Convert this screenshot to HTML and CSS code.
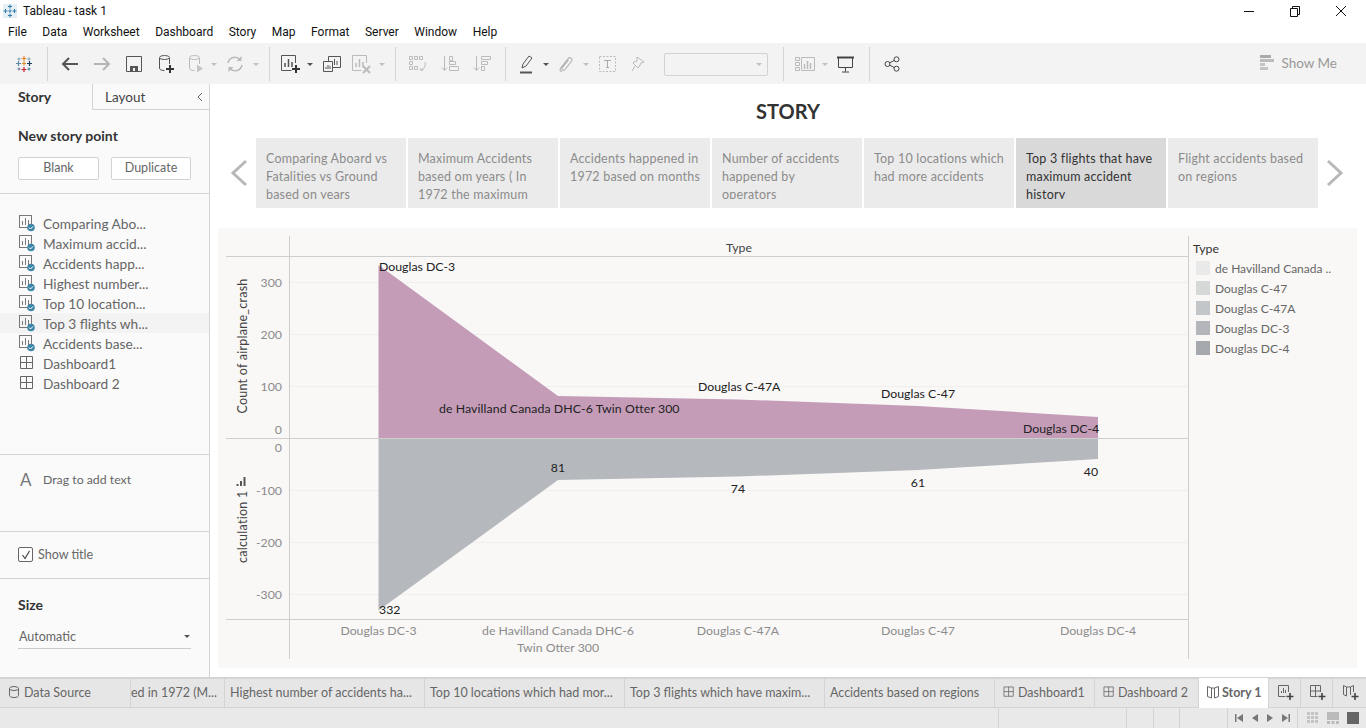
FILE: index.html
```html
<!DOCTYPE html>
<html lang="en">
<head>
<meta charset="utf-8">
<title>Tableau - task 1</title>
<link rel="stylesheet" href="styles.css">
</head>
<body>
<svg class="defs" width="0" height="0" aria-hidden="true">
  <defs>
    <symbol id="sheet" viewBox="0 0 18 18">
      <rect x="1.5" y="1.5" width="12" height="12" fill="none" stroke="#777"/>
      <path d="M4.5 11V7M7.5 11V4M10.5 11V6" stroke="#777" fill="none"/>
      <circle cx="13" cy="13.5" r="3.8" fill="#3f85a8"/>
      <path d="M11 13.5l1.5 1.5 2.5-2.6" stroke="#fff" fill="none"/>
    </symbol>
    <symbol id="dash" viewBox="0 0 18 18">
      <path d="M2.5 2.5h12v12h-12zM8.5 2.5v12M2.5 8.5h12" stroke="#666" fill="none"/>
    </symbol>
  </defs>
</svg>

<header class="titlebar">
  <svg class="title-logo" width="16" height="16" viewBox="0 0 16 16">
    <rect x="1" y="1" width="14" height="14" fill="#e4eff5"/>
    <path d="M8 1.5v4M6 3.5h4M8 10.5v4M6 12.5h4M3.5 6v4M1.500 8h4M12.500 6v4M10.500 8h4M8 6.500v3M6.500 8h3" stroke="#2d7ba6" fill="none"/>
  </svg>
  <span class="title-text">Tableau - task 1</span>
  <div class="win-controls">
    <svg width="46" height="20" viewBox="0 0 46 20"><path d="M18 10.500h10" stroke="#111"/></svg>
    <svg width="46" height="20" viewBox="0 0 46 20"><path d="M18.500 7.500h7v8h-7zM20.500 7.500v-2h7v8h-2" fill="none" stroke="#111"/></svg>
    <svg width="46" height="20" viewBox="0 0 46 20"><path d="M18 5l10 10M28 5L18 15" stroke="#111"/></svg>
  </div>
</header>

<nav class="menubar">
  <span>File</span><span>Data</span><span>Worksheet</span><span>Dashboard</span><span>Story</span><span>Map</span><span>Format</span><span>Server</span><span>Window</span><span>Help</span>
</nav>

<div class="toolbar">
  <div class="tg g1">
    <div class="tb w32">
      <svg width="18" height="18" viewBox="0 0 18 18" fill="none">
        <path d="M9 1v5M6.500 3.500h5" stroke="#e8862c" stroke-width="1.200"/>
        <path d="M3.500 6v5M1 8.500h5" stroke="#5b87a8" stroke-width="1.200"/>
        <path d="M14.500 6v5M12 8.500h5" stroke="#1f3f63" stroke-width="1.200"/>
        <path d="M9 12v5M6.500 14.500h5" stroke="#c72035" stroke-width="1.200"/>
        <path d="M9 6.500v4M7 8.500h4" stroke="#d98a2b" stroke-width="1.200"/>
        <path d="M4 2.500v3M2.500 4h3M14 2.500v3M12.500 4h3" stroke="#7099a6" stroke-width=".9"/>
        <path d="M4 12.500v3M2.500 14h3" stroke="#5c6692" stroke-width=".9"/>
        <path d="M14 12.500v3M12.500 14h3" stroke="#2a6f9e" stroke-width=".9"/>
      </svg>
    </div>
  </div>
  <div class="tg g2">
    <div class="tb w32"><svg width="18" height="16" viewBox="0 0 18 16" fill="none"><path d="M17 8H2M8 2L2 8l6 6" stroke="#555" stroke-width="2"/></svg></div>
    <div class="tb w32"><svg width="18" height="16" viewBox="0 0 18 16" fill="none"><path d="M1 8h15M10 2l6 6-6 6" stroke="#b5b5b5" stroke-width="2"/></svg></div>
    <div class="tb w32"><svg width="16" height="16" viewBox="0 0 16 16" fill="none"><path d="M.5.500h15v15H.5z" stroke="#555"/><path d="M4 15V10h8v5" fill="#555"/><path d="M7 12h2v3H7z" fill="#f3f3f3"/></svg></div>
    <div class="tb w32"><svg width="18" height="20" viewBox="0 0 18 20" fill="none"><path d="M2.500 4v10c0 1.500 1.500 2.500 5 2.500M12.500 4v6" stroke="#555"/><ellipse cx="7.500" cy="3.500" rx="5" ry="2" stroke="#555"/><path d="M13 11v8M9 15h8" stroke="#333" stroke-width="2"/></svg></div>
    <div class="tb w28"><svg width="18" height="20" viewBox="0 0 18 20" fill="none"><path d="M2.500 4v10c0 1.500 1.500 2.500 5 2.500M12.500 4v6" stroke="#bbb"/><ellipse cx="7.500" cy="3.500" rx="5" ry="2" stroke="#bbb"/><path d="M10 10.500l6 4-6 4z" fill="#c4c4c4"/></svg></div>
    <div class="tb w8"><i class="caret off"></i></div>
    <div class="tb w34"><svg width="18" height="18" viewBox="0 0 18 18" fill="none"><path d="M2 8a7 7 0 0 1 12-3.500M16 10a7 7 0 0 1-12 3.500" stroke="#bbb" stroke-width="1.500"/><path d="M15.500 1v5h-5zM2.500 17v-5h5z" fill="#bbb"/></svg></div>
    <div class="tb w8"><i class="caret off"></i></div>
  </div>
  <div class="tg g3">
    <div class="tb w31"><svg width="20" height="20" viewBox="0 0 20 20" fill="none"><path d="M14.500 9V1.500h-14v15h10" stroke="#555"/><path d="M4 13V9M7.500 13V5M11 13V8" stroke="#555" stroke-width="1.500"/><path d="M15 11v8M11 15h8" stroke="#333" stroke-width="2"/></svg></div>
    <div class="tb w8"><i class="caret"></i></div>
    <div class="tb w36"><svg width="18" height="18" viewBox="0 0 18 18" fill="none"><path d="M5.500 1.500h12v11h-12z" stroke="#555" fill="#f3f3f3"/><path d="M9 10V7M11.500 10V4M14 10V6" stroke="#555"/><path d="M.5 6.500h9v10h-9z" stroke="#555" fill="#f3f3f3"/><path d="M3 14v-2M5 14v-4M7 14v-3" stroke="#555"/></svg></div>
    <div class="tb w22"><svg width="20" height="20" viewBox="0 0 20 20" fill="none"><path d="M15.500 9V1.500h-14v15h9" stroke="#bbb"/><path d="M5 13V9M8.500 13V5M12 13V8" stroke="#bbb" stroke-width="1.500"/><path d="M12 12l7 7M19 12l-7 7" stroke="#bbb" stroke-width="2"/></svg></div>
    <div class="tb w20"><i class="caret off"></i></div>
  </div>
  <div class="tg g4">
    <div class="tb w32"><svg width="20" height="18" viewBox="0 0 20 18" fill="none" stroke="#bbb"><path d="M1.500 1.500h3v3h-3zM6.500 1.500h3v3h-3zM11.500 1.500h3v3h-3zM1.500 6.500h3v3h-3zM1.500 11.500h3v3h-3zM6.500 11.500h3v3h-3z"/><path d="M17 7c1 4-1 7-4 8M12 13l1 2.500 2.500-1"/></svg></div>
    <div class="tb w32"><svg width="18" height="18" viewBox="0 0 18 18" fill="none" stroke="#bbb"><path d="M3.500 1v14M1 12.500l2.500 3 2.500-3"/><path d="M8.500 1.500h3v4h-3zM8.500 6.500h6v3h-6zM8.500 11.500h9v4h-9z"/></svg></div>
    <div class="tb w32"><svg width="18" height="18" viewBox="0 0 18 18" fill="none" stroke="#bbb"><path d="M3.500 1v14M1 12.500l2.500 3 2.500-3"/><path d="M8.500 1.500h9v3h-9zM8.500 6.500h6v3h-6zM8.500 11.500h3v4h-3z"/></svg></div>
  </div>
  <div class="tg g5">
    <div class="tb w30"><svg width="14" height="20" viewBox="0 0 14 20" fill="none"><path d="M2 14l1-4L9 2l3 2-6 8z" stroke="#555"/><path d="M0 18.500h12" stroke="#555" stroke-width="2"/></svg></div>
    <div class="tb w8"><i class="caret"></i></div>
    <div class="tb w32"><svg width="14" height="16" viewBox="0 0 14 16" fill="none"><path d="M9.500 4L3.500 11.500C2 13.500 4.500 15.500 6 13.500L12.300 5.500C14.300 2.500 10.800.5 9 2.800L2 11.500C.2 14 1.500 15.500 3 15.500" stroke="#b4b4b4" stroke-width="1.200"/></svg></div>
    <div class="tb w8"><i class="caret off"></i></div>
    <div class="tb w36"><svg width="18" height="16" viewBox="0 0 18 16" fill="none"><rect x=".5" y=".5" width="16" height="15" stroke="#bbb" stroke-dasharray="2 1.500"/><path d="M5 4.500h7M8.500 4.500v7M7 11.500h3" stroke="#aaa"/></svg></div>
    <div class="tb w24"><svg width="14" height="16" viewBox="0 0 14 16" fill="none"><path d="M6 1l7 5-3 1-2 4-1 1-5-5 1-1 3-1zM4 10l-3 5" stroke="#bbb"/></svg></div>
    <div class="font-box"><i class="caret off"></i></div>
  </div>
  <div class="tg g6">
    <div class="tb w32"><svg width="20" height="16" viewBox="0 0 20 16" fill="none" stroke="#bbb"><path d="M.5 1.500h4v3h-4zM.5 6.500h4v3h-4zM.5 11.500h4v3h-4zM6.500 1.500h13v13h-13z"/><path d="M9.500 13V8M12.500 13V5M15.500 13V7" stroke-width="1.500"/></svg></div>
    <div class="tb w8"><i class="caret off"></i></div>
    <div class="tb w34"><svg width="18" height="18" viewBox="0 0 18 18" fill="none"><path d="M0 2.500h17" stroke="#444" stroke-width="2"/><path d="M1.500 3v9.500h14V3M8.500 12.500v4M5 17h7" stroke="#444"/></svg></div>
  </div>
  <div class="tg g7">
    <div class="tb w32"><svg width="16" height="16" viewBox="0 0 16 16" fill="none" stroke="#444"><circle cx="3.500" cy="8" r="2.500"/><circle cx="12.500" cy="3.300" r="2.500"/><circle cx="12.500" cy="12.700" r="2.500"/><path d="M5.700 6.800l4.600-2.400M5.700 9.200l4.600 2.400"/></svg></div>
  </div>
  <div class="show-me">
    <svg width="15" height="16" viewBox="0 0 15 16"><path d="M0 0h11v3H0z" fill="#aaa"/><path d="M0 4h14v3H0z" fill="#bbb"/><path d="M0 8h5v3H0z" fill="#c4c4c4"/><path d="M0 12h8v3H0z" fill="#c4c4c4"/></svg>
    <span>Show Me</span>
  </div>
</div>

<main class="workspace">
  <aside class="sidebar">
    <div class="side-tabs">
      <div class="side-tab active">Story</div>
      <div class="side-tab">Layout
        <svg class="collapse" width="8" height="10" viewBox="0 0 8 10" fill="none"><path d="M6 1L2 5l4 4" stroke="#666"/></svg>
      </div>
    </div>
    <section class="new-point">
      <h2>New story point</h2>
      <div class="btn-row">
        <button class="btn blank">Blank</button>
        <button class="btn dup">Duplicate</button>
      </div>
    </section>
    <ul class="sheet-list">
      <li><svg width="18" height="18"><use href="#sheet"/></svg>Comparing Abo...</li>
      <li><svg width="18" height="18"><use href="#sheet"/></svg>Maximum accid...</li>
      <li><svg width="18" height="18"><use href="#sheet"/></svg>Accidents happ...</li>
      <li><svg width="18" height="18"><use href="#sheet"/></svg>Highest number...</li>
      <li><svg width="18" height="18"><use href="#sheet"/></svg>Top 10 location...</li>
      <li class="current"><svg width="18" height="18"><use href="#sheet"/></svg>Top 3 flights wh...</li>
      <li><svg width="18" height="18"><use href="#sheet"/></svg>Accidents base...</li>
      <li><svg width="18" height="18"><use href="#dash"/></svg>Dashboard1</li>
      <li><svg width="18" height="18"><use href="#dash"/></svg>Dashboard 2</li>
    </ul>
    <section class="drag-text"><span class="big-a">A</span><span>Drag to add text</span></section>
    <section class="show-title">
      <span class="check"><svg width="12" height="12" viewBox="0 0 12 12" fill="none"><path d="M2.500 6l2.500 3.500L9.500 2" stroke="#444" stroke-width="1.200"/></svg></span>
      <span>Show title</span>
    </section>
    <section class="size">
      <h3>Size</h3>
      <div class="size-select"><span>Automatic</span><i class="caret"></i></div>
    </section>
  </aside>

  <div class="story">
    <h1>STORY</h1>
    <div class="navigator">
      <svg class="nav-arrow" width="18" height="28" viewBox="0 0 18 28" fill="none"><path d="M16 2L3 14l13 12" stroke="#b8b8b8" stroke-width="3"/></svg>
      <div class="points">
        <div class="point"><p>Comparing Aboard vs Fatalities vs Ground based on years</p></div>
        <div class="point"><p>Maximum Accidents based om years ( In 1972 the maximum</p></div>
        <div class="point"><p>Accidents happened in 1972 based on months</p></div>
        <div class="point"><p>Number of accidents happened by<br>operators</p></div>
        <div class="point"><p>Top 10 locations which had more accidents</p></div>
        <div class="point selected"><p>Top 3 flights that have maximum accident history</p></div>
        <div class="point"><p>Flight accidents based on regions</p></div>
      </div>
      <svg class="nav-arrow" width="18" height="28" viewBox="0 0 18 28" fill="none"><path d="M2 2l13 12L2 26" stroke="#b8b8b8" stroke-width="3"/></svg>
    </div>

    <div class="viz">
      <svg class="chart" width="1139" height="440" viewBox="218 228 1139 440">
        <g class="grid">
          <path d="M290 282.500h898M290 334.500h898M290 386.500h898M290 490.500h898M290 542.500h898M290 594.500h898"/>
        </g>
        <polygon class="area-top" points="378.500,265 558,396 738,399.500 918,406 1098,417 1098,438 378.500,438"/>
        <polygon class="area-bot" points="378.500,438 1098,438 1098,459 918,470 738,476.500 558,480 378.500,610.500"/>
        <g class="rule">
          <path d="M289.500 236v423M1188.500 236v423M226 256.500h962M226 438.500h962M226 619.500h962"/>
        </g>
        <text class="hdr" x="739" y="251.500" text-anchor="middle">Type</text>
        <g class="axis" text-anchor="end">
          <text x="282" y="287">300</text><text x="282" y="339">200</text><text x="282" y="391">100</text><text x="282" y="434">0</text>
          <text x="282" y="452">0</text><text x="282" y="495">-100</text><text x="282" y="547">-200</text><text x="282" y="599">-300</text>
        </g>
        <text class="hdr rot" transform="translate(246.500 346) rotate(-90)" text-anchor="middle">Count of airplane_crash</text>
        <text class="hdr rot" transform="translate(246.500 563) rotate(-90)">calculation 1</text>
        <path class="sort" d="M237.500 486v-2M241 486v-5M244.500 486v-9"/>
        <g class="mark">
          <text x="379" y="271">Douglas DC-3</text>
          <text class="wide" x="439" y="413">de Havilland Canada DHC-6 Twin Otter 300</text>
          <text x="698" y="391">Douglas C-47A</text>
          <text x="881" y="398">Douglas C-47</text>
          <text x="1023" y="432.500">Douglas DC-4</text>
          <text x="558" y="472" text-anchor="middle">81</text>
          <text x="738" y="493" text-anchor="middle">74</text>
          <text x="918" y="487" text-anchor="middle">61</text>
          <text x="1091" y="476" text-anchor="middle">40</text>
          <text x="379" y="614">332</text>
        </g>
        <g class="axis" text-anchor="middle">
          <text x="378.500" y="635">Douglas DC-3</text>
          <text x="558" y="635">de Havilland Canada DHC-6</text>
          <text x="558" y="652">Twin Otter 300</text>
          <text x="738" y="635">Douglas C-47A</text>
          <text x="918" y="635">Douglas C-47</text>
          <text x="1098" y="635">Douglas DC-4</text>
        </g>
      </svg>
      <div class="legend">
        <h4>Type</h4>
        <ul>
          <li><i class="sw s1"></i>de Havilland Canada ..</li>
          <li><i class="sw s2"></i>Douglas C-47</li>
          <li><i class="sw s3"></i>Douglas C-47A</li>
          <li><i class="sw s4"></i>Douglas DC-3</li>
          <li><i class="sw s5"></i>Douglas DC-4</li>
        </ul>
      </div>
    </div>
  </div>
</main>

<div class="tabbar">
  <div class="tab t-ds"><svg width="10" height="12" viewBox="0 0 10 12" fill="none" stroke="#666"><path d="M.5 2.500v7c0 1 1.500 2 4.500 2s4.500-1 4.500-2v-7"/><ellipse cx="5" cy="2.500" rx="4.500" ry="2"/></svg>Data Source</div>
  <div class="tab t-clip">ed in 1972 (M...</div>
  <div class="tab t-200">Highest number of accidents ha...</div>
  <div class="tab t-200">Top 10 locations which had mor...</div>
  <div class="tab t-200">Top 3 flights which have maxim...</div>
  <div class="tab t-170">Accidents based on regions</div>
  <div class="tab t-100"><svg width="14" height="14"><use href="#dash"/></svg>Dashboard1</div>
  <div class="tab t-104"><svg width="14" height="14"><use href="#dash"/></svg>Dashboard 2</div>
  <div class="tab t-story"><svg width="14" height="14" viewBox="0 0 14 14" fill="none" stroke="#666"><path d="M1.500 1.500l4 1.500v10l-4-1.500zM12.500 1.500l-4 1.500v10l4-1.500zM5.500 3h3"/></svg>Story 1</div>
  <div class="tab t-add"><svg width="18" height="18" viewBox="0 0 18 18" fill="none"><path d="M11.500 8V1.500h-10v11h7M4.500 9V7M6.500 9V4M8.500 9V6" stroke="#666"/><path d="M13 9v7M9.500 12.500h7" stroke="#444" stroke-width="1.600"/></svg></div>
  <div class="tab t-add"><svg width="18" height="18" viewBox="0 0 18 18" fill="none"><path d="M11.500 8V1.500h-10v11h7M6.500 1.500v11M1.500 7h10" stroke="#666"/><path d="M13 9v7M9.500 12.500h7" stroke="#444" stroke-width="1.600"/></svg></div>
  <div class="tab t-add end"><svg width="18" height="18" viewBox="0 0 18 18" fill="none"><path d="M1.500 1.500l3 1.500v9l-3-1.500zM11.500 8V1.500l-3 1.500v8M4.500 3h4" stroke="#666"/><path d="M13 9v7M9.500 12.500h7" stroke="#444" stroke-width="1.600"/></svg></div>
</div>

<footer class="statusbar">
  <div class="st s-999"></div>
  <div class="st s-128"></div>
  <div class="st s-27"></div>
  <div class="st s-26"></div>
  <div class="st s-48"></div>
  <div class="st s-70">
    <svg width="8" height="8" viewBox="0 0 8 8" fill="#777"><path d="M0 0h1.500v8H0zM8 0v8L2 4z"/></svg>
    <svg width="8" height="8" viewBox="0 0 8 8" fill="#777"><path d="M7 0v8L1 4z"/></svg>
    <svg width="8" height="8" viewBox="0 0 8 8" fill="#777"><path d="M1 0v8l6-4z"/></svg>
    <svg width="8" height="8" viewBox="0 0 8 8" fill="#777"><path d="M6.500 0H8v8H6.500zM0 0v8l6-4z"/></svg>
  </div>
  <div class="st s-views">
    <svg width="12" height="12" viewBox="0 0 12 12" fill="#c4c4c4"><path d="M0 0h3v3H0zM4 0h3v3H4zM8 0h3v3H8zM0 4h3v3H0zM4 4h3v3H4zM8 4h3v3H8zM0 8h3v3H0zM4 8h3v3H4zM8 8h3v3H8z"/></svg>
    <svg width="12" height="12" viewBox="0 0 12 12" fill="#bbb"><path d="M0 0h12v8H0zM0 9h3v3H0zM4.500 9h3v3h-3zM9 9h3v3H9z"/></svg>
    <svg width="12" height="12" viewBox="0 0 12 12" fill="#666"><path d="M0 0h12v12H0z"/></svg>
  </div>
</footer>
</body>
</html>
```
FILE: styles.css
```css
* { box-sizing: border-box; }
html, body { margin: 0; padding: 0; }
body {
  width: 1366px;
  height: 728px;
  overflow: hidden;
  display: flex;
  flex-direction: column;
  background: #fff;
  font-family: "Lato", "Liberation Sans", sans-serif;
  font-size: 12.500px;
  color: #555;
}
.defs { position: absolute; }

/* window chrome */
.titlebar {
  height: 21px;
  display: flex;
  align-items: center;
  padding-left: 2px;
  font-family: "Roboto", sans-serif;
  font-size: 12px;
  color: #111;
}
.title-text { margin-left: 5px; }
.win-controls { margin-left: auto; display: flex; padding-right: 2px; }
.win-controls svg { display: block; }
.menubar {
  height: 22px;
  display: flex;
  align-items: center;
  gap: 15.500px;
  padding-left: 8px;
  font-family: "Roboto", sans-serif;
  font-size: 12px;
  color: #111;
}

/* toolbar */
.toolbar {
  height: 41px;
  padding: 4px 0 3px;
  display: flex;
  background: #f3f3f3;
}
.tg { display: flex; align-items: center; border-right: 1px solid #d4d4d4; flex: none; }
.g1 { width: 48px; padding-left: 8px; }
.g2 { width: 222px; padding-left: 6px; }
.g3 { width: 126px; padding-left: 5px; }
.g4 { width: 110px; padding-left: 6px; }
.g5 { width: 278px; padding-left: 6px; }
.g6 { width: 86px; padding-left: 5px; }
.g7 { border-right: 0; padding-left: 6px; }
.tb { display: flex; align-items: center; justify-content: center; flex: none; height: 34px; }
.w8 { width: 8px; }
.w20 { width: 20px; }
.w22 { width: 22px; }
.w24 { width: 24px; }
.w28 { width: 28px; }
.w30 { width: 30px; }
.w31 { width: 31px; }
.w32 { width: 32px; }
.w34 { width: 34px; }
.w36 { width: 36px; }
.caret {
  display: block;
  width: 0; height: 0;
  border-left: 3.500px solid transparent;
  border-right: 3.500px solid transparent;
  border-top: 3.500px solid #555;
}
.caret.off { border-top-color: #c2c2c2; }
.font-box {
  width: 104px;
  height: 23px;
  margin-left: 14px;
  border: 1px solid #d2d2d2;
  border-radius: 2px;
  display: flex;
  align-items: center;
  justify-content: flex-end;
  padding-right: 5px;
}
.show-me {
  margin-left: auto;
  padding: 0 29px 3px 0;
  display: flex;
  align-items: center;
  gap: 6px;
  color: #999;
  font-size: 13.500px;
}

/* workspace */
.workspace { height: 593px; display: flex; }
.sidebar {
  width: 210px;
  flex: none;
  background: #fafafa;
  border-right: 1px solid #d4d4d4;
  display: flex;
  flex-direction: column;
}
.side-tabs { height: 26px; display: flex; flex: none; }
.side-tab {
  position: relative;
  flex: 1;
  padding: 5px 0 0 12px;
  font-size: 13.500px;
  color: #444;
  border-bottom: 1px solid #d4d4d4;
  border-left: 1px solid #d4d4d4;
}
.side-tab.active {
  flex: none;
  width: 92px;
  padding: 4px 0 0 18px;
  border: 0;
  font-size: 14px;
  font-weight: 700;
  color: #333;
}
.collapse { position: absolute; right: 5px; top: 8px; }
.new-point {
  height: 84px;
  flex: none;
  padding: 17px 18px 0;
  border-bottom: 1px solid #d4d4d4;
}
.new-point h2 { margin: 0; font-size: 14px; line-height: 18px; font-weight: 700; color: #333; }
.btn-row { display: flex; gap: 12px; margin-top: 12px; }
.btn {
  height: 23px;
  padding: 0 0 2px;
  background: #fff;
  border: 1px solid #d2d2d2;
  border-radius: 2px;
  font: 12.500px "Lato", sans-serif;
  color: #666;
}
.blank { width: 81px; }
.dup { width: 80px; }
.sheet-list {
  height: 261px;
  flex: none;
  list-style: none;
  margin: 0;
  padding: 19px 0 0;
  border-bottom: 1px solid #d4d4d4;
}
.sheet-list li {
  height: 20px;
  display: flex;
  align-items: center;
  gap: 7px;
  padding-left: 18px;
  font-size: 13.700px;
  color: #666;
}
.sheet-list li.current { background: #f3f3f3; }
.drag-text {
  height: 77px;
  flex: none;
  display: flex;
  align-items: flex-start;
  padding: 14px 0 0 20px;
  border-bottom: 1px solid #d4d4d4;
  color: #666;
  font-size: 12.300px;
}
.big-a { font-size: 17px; width: 23px; line-height: 22px; color: #777; }
.drag-text span:last-child { line-height: 22px; }
.show-title {
  height: 47px;
  flex: none;
  display: flex;
  align-items: center;
  gap: 5px;
  padding: 0 0 1px 18px;
  border-bottom: 1px solid #d4d4d4;
  color: #666;
}
.check {
  width: 15px; height: 15px;
  border: 1px solid #666;
  border-radius: 2px;
  display: flex;
  align-items: center;
  justify-content: center;
  background: #fff;
}
.size { padding: 17px 18px 0; }
.size h3 { margin: 0; font-size: 14px; line-height: 18px; font-weight: 700; color: #333; }
.size-select {
  margin-top: 12px;
  height: 23px;
  display: flex;
  align-items: center;
  justify-content: space-between;
  padding: 0 1px 1px;
  border-bottom: 1px solid #ccc;
  color: #666;
}

/* story */
.story { flex: 1; min-width: 0; display: flex; flex-direction: column; }
.story h1 {
  margin: 0;
  height: 54px;
  flex: none;
  text-align: center;
  font-size: 20px;
  line-height: 54px;
  font-weight: 700;
  color: #333;
}
.navigator {
  height: 70px;
  flex: none;
  display: flex;
  align-items: center;
  padding-left: 20px;
}
.nav-arrow { flex: none; margin-top: -1px; }
.points { display: flex; gap: 2px; margin: 0 8px; }
.point {
  width: 150px;
  height: 70px;
  background: #ebebeb;
  padding: 12px 8px 0 10px;
  color: #8c8c8c;
}
.point p { margin: 0; height: 49px; overflow: hidden; line-height: 18px; font-size: 12.500px; letter-spacing: .2px; }
.point.selected { background: #d9d9d9; color: #333; }
.viz {
  margin: 20px 9px 0 8px;
  height: 440px;
  flex: none;
  position: relative;
  background: #f9f8f7;
}
.chart { display: block; }
.chart text { font-family: "Lato", sans-serif; font-size: 12.300px; }
.chart text.rot { letter-spacing: .25px; font-size: 12.500px; }
.chart text.wide { letter-spacing: .08px; }
.grid path { stroke: #f0efee; fill: none; }
.rule path { stroke: #cfcecd; fill: none; }
.area-top { fill: #c49cb8; }
.area-bot { fill: #b5b8bc; }
.axis { fill: #8c8c8c; }
.hdr { fill: #444; }
.mark { fill: #222; }
.sort { stroke: #555; fill: none; stroke-width: 2; }
.legend { position: absolute; left: 975px; top: 12px; color: #666; }
.legend h4 { margin: 0; font-size: 12.300px; line-height: 18px; font-weight: 400; color: #333; }
.legend ul { list-style: none; margin: 0; padding: 0 0 0 3px; }
.legend li { height: 20px; display: flex; align-items: center; gap: 5px; font-size: 12px; white-space: nowrap; }
.sw { width: 14px; height: 14px; flex: none; display: block; }
.s1 { background: #e9e9e9; }
.s2 { background: #d6d8d8; }
.s3 { background: #c3c6c8; }
.s4 { background: #b2b5b9; }
.s5 { background: #a5a8ad; }

/* tabs */
.tabbar {
  height: 31px;
  display: flex;
  background: #e6e6e6;
  border-top: 2px solid #d4d4d4;
  border-bottom: 1px solid #d4d4d4;
}
.tab {
  flex: none;
  display: flex;
  align-items: center;
  justify-content: flex-start;
  gap: 5px;
  padding: 0 0 2px 5px;
  border-right: 1px solid #d4d4d4;
  white-space: nowrap;
  overflow: hidden;
  color: #666;
}
.t-ds { width: 131px; padding-left: 9px; }
.t-clip { width: 94px; padding-left: 0; }
.t-200 { width: 200px; }
.t-170 { width: 170px; }
.t-100 { width: 100px; padding-left: 7px; gap: 2px; }
.t-104 { width: 104px; padding-left: 7px; gap: 2px; }
.t-story { width: 70px; padding-left: 7px; gap: 2px; background: #fff; font-weight: 700; margin-bottom: -1px; margin-top: -1px; }
.t-add { width: 32px; justify-content: center; padding: 0 0 0 3px; }
.t-add.end { border-right: 0; }

/* status */
.statusbar { height: 20px; display: flex; background: #e9e9e9; }
.st { flex: none; border-right: 1px solid #d4d4d4; height: 100%; display: flex; align-items: center; }
.s-999 { width: 999px; }
.s-128 { width: 128px; }
.s-27 { width: 27px; }
.s-26 { width: 26px; }
.s-48 { width: 48px; }
.s-70 { width: 70px; justify-content: space-around; padding: 0 3px; }
.s-views { border-right: 0; flex: 1; gap: 8px; padding-left: 9px; }
```
